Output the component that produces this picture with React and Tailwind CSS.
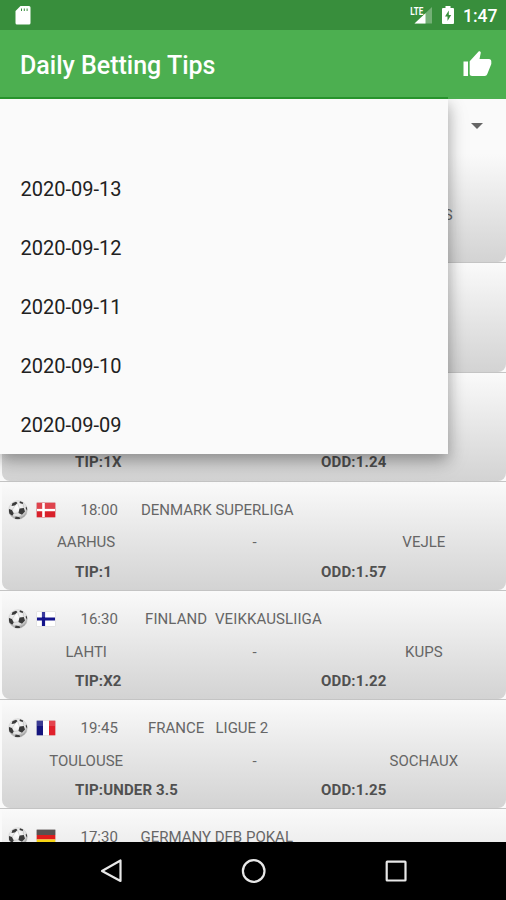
const DATES = ['2020-09-13', '2020-09-12', '2020-09-11', '2020-09-10', '2020-09-09'];

const MATCHES = [
  { away: 'NANTES' },
  {},
  { tip: '1X', odd: '1.24' },
  { flag: 'denmark', time: '18:00', league: 'DENMARK SUPERLIGA', indent: 'ml-[22.5px]', home: 'AARHUS', away: 'VEJLE', tip: '1', odd: '1.57' },
  { flag: 'finland', time: '16:30', league: 'FINLAND  VEIKKAUSLIIGA', indent: 'ml-[26.5px] tracking-[0.1px]', home: 'LAHTI', away: 'KUPS', tip: 'X2', odd: '1.22' },
  { flag: 'france', time: '19:45', league: 'FRANCE   LIGUE 2', indent: 'ml-[29.5px]', home: 'TOULOUSE', away: 'SOCHAUX', tip: 'UNDER 3.5', odd: '1.25' },
  { flag: 'germany', time: '17:30', league: 'GERMANY DFB POKAL', indent: 'ml-[22px]' },
];

function Flag({ name }) {
  return (
    <svg width="20" height="16" viewBox="0 0 20 16" className="shrink-0">
      <rect x="0.5" y="0.5" width="19" height="15" rx="1" fill="#fff" stroke="#d6d6d6" strokeWidth="0.6" />
      {name === 'denmark' && (
        <>
          <rect x="0.7" y="0.7" width="18.6" height="14.6" fill="#d9202b" />
          <path d="M7.5 1v14M1 8h18" stroke="#fff" strokeWidth="2.6" />
        </>
      )}
      {name === 'finland' && <path d="M7.5 1v14M1 8h18" stroke="#14148c" strokeWidth="3.2" />}
      {name === 'france' && (
        <>
          <rect x="0.7" y="0.7" width="6.3" height="14.6" fill="#15157e" />
          <rect x="13" y="0.7" width="6.3" height="14.6" fill="#e0202b" />
        </>
      )}
      {name === 'germany' && (
        <>
          <rect x="0.7" y="0.7" width="18.6" height="5.3" fill="#3a3030" />
          <rect x="0.7" y="6" width="18.6" height="4.5" fill="#df1c1c" />
          <rect x="0.7" y="10.5" width="18.6" height="4.8" fill="#f7d514" />
        </>
      )}
      <rect x="1" y="1" width="18" height="5" fill="#fff" opacity="0.16" />
    </svg>
  );
}

function Ball() {
  return (
    <svg width="20" height="20" viewBox="0 0 20 20" className="shrink-0">
      <defs>
        <radialGradient id="ball" cx="0.45" cy="0.35" r="0.65">
          <stop offset="0" stopColor="#fff" />
          <stop offset="0.7" stopColor="#e2e2e2" />
          <stop offset="1" stopColor="#8c8c8c" />
        </radialGradient>
        <clipPath id="ballClip">
          <circle cx="10" cy="10" r="9.3" />
        </clipPath>
      </defs>
      <circle cx="10" cy="10" r="9.3" fill="url(#ball)" stroke="#c8c8c8" strokeWidth="0.5" />
      <g clipPath="url(#ballClip)" fill="#3a3a3a">
        <path d="M11.5 8.500l4.300-.6 1.200 3.600-3 3.200-3.600-1.800z" />
        <path d="M4.500 3L8 1.800 9.500 3 7 5.500 3.500 6z" />
        <path d="M12 1l3.500 1.500-.8 1.500-3.200-1z" />
        <path d="M1 9l3 1 1.800 3.500-1.600 2.200L1 13.500z" />
        <path d="M7.500 16.500l4.200.7.300 1.800-5 .3z" />
        <path d="M18.200 6.500l1.300 2.500-.5 1.500-1.400-2.500z" />
        <path d="M9.500 3l2 5.500M7 5.500L4 10M10.400 12.900l-4.600.6M14 14.700l-2.300 2.500M15.800 7.900l-.6-3.900" stroke="#b5b5b5" strokeWidth="0.5" fill="none" />
      </g>
    </svg>
  );
}

function MatchRow({ match }) {
  return (
    <div className="h-[109.2px] shrink-0 border-b border-[#c4c4c4] bg-[#fafafa] pl-[2px]">
      <div className="h-full rounded-b-[8px] bg-linear-to-b from-[#fafafa] to-[#d3d3d3] pt-[17px]">
        <div className="flex h-[22px] items-center pl-[5.5px]">
          {match.flag && (
            <>
              <Ball />
              <div className="ml-[8px] flex">
                <Flag name={match.flag} />
              </div>
              <span className="ml-[25px] w-[38px] whitespace-nowrap">{match.time}</span>
              <span className={`whitespace-pre ${match.indent}`}>{match.league}</span>
            </>
          )}
        </div>
        <div className="mt-[10.5px] grid h-[22px] w-[507px] grid-cols-3 items-center pr-[2px] text-center">
          <span>{match.home}</span>
          <span>{match.home && '-'}</span>
          <span className="pl-[2px]">{match.away}</span>
        </div>
        <div className="mt-[7.5px] flex h-[22px] items-center pl-[73px] font-bold tracking-[0.15px] text-[#505050]">
          {match.tip && (
            <>
              <span className="w-[246px]">TIP:{match.tip}</span>
              <span>ODD:{match.odd}</span>
            </>
          )}
        </div>
      </div>
    </div>
  );
}

function StatusBar() {
  return (
    <div className="flex h-[30px] shrink-0 items-center bg-[#388e3c] text-white">
      <svg width="16" height="20" viewBox="0 0 16 20" className="ml-[15px]">
        <path d="M5.5 1H14a1.5 1.5 0 0 1 1.500 1.500V18A1.500 1.500 0 0 1 14 19.500H2A1.500 1.500 0 0 1 .5 18V6z" fill="#fff" />
        <path d="M6.500 3.500v2.500M9.300 3.500v2.500M12.100 3.500v2.500" stroke="#388e3c" strokeWidth="1" />
      </svg>
      <div className="flex-1" />
      <svg width="24" height="20" viewBox="0 0 24 20" className="mr-[8px]">
        <path d="M22 2v16.500H4.500z" fill="#fff" opacity="0.3" />
        <path d="M15.500 8.200v10.300H4.500z" fill="#fff" />
        <path d="M0 0h13v10.500H0z" fill="#388e3c" />
        <text x="0.300" y="9.800" fontSize="11.500" fontWeight="700" fontFamily="Roboto, sans-serif" fill="#fff" textLength="13" lengthAdjust="spacingAndGlyphs">LTE</text>
      </svg>
      <svg width="12" height="20" viewBox="0 0 12 20" className="mr-[9px]">
        <path d="M3.500 1h5v2H11a1 1 0 0 1 1 1v14a1 1 0 0 1-1 1H1a1 1 0 0 1-1-1V4a1 1 0 0 1 1-1h2.500z" fill="#fff" />
        <path d="M6.800 5.500L3 11.500h2.500v4.500L9.200 10H6.800z" fill="#388e3c" />
      </svg>
      <span className="w-[43px] pt-[2px] text-[17.5px] font-medium whitespace-nowrap">1:47</span>
    </div>
  );
}

function NavBar() {
  return (
    <div className="flex h-[58px] shrink-0 items-center bg-black">
      <svg width="506" height="58" viewBox="0 0 506 58" fill="none" stroke="#e8e8e8" strokeWidth="2.200" strokeLinejoin="round">
        <path d="M120.500 18.500v20.500L102 29z" />
        <circle cx="253.700" cy="29" r="10.800" />
        <rect x="386.700" y="19.700" width="18.800" height="18.800" rx="0.500" />
      </svg>
    </div>
  );
}

export default function App() {
  return (
    <div className="flex h-[900px] w-[506px] flex-col overflow-hidden bg-[#fafafa] font-[Roboto,sans-serif] text-[15px] text-[#666]">
      <StatusBar />
      <header className="flex h-[69px] shrink-0 flex-col bg-[#4caf50] text-white">
        <div className="flex flex-1 items-center justify-between pt-[4px] pr-[14px] pl-[20px]">
          <h1 className="text-[25px] font-medium">Daily Betting Tips</h1>
          <svg width="30" height="28" viewBox="0 0 30 28" fill="#fff" className="mb-[3px]">
            <path d="M1.500 11.500h4.500V26H1.500zM7.700 11.200L16.600 1.500c.7-.8 2.300-.1 2.200 1.300L17.500 9H27c1.500 0 2.300 1.200 2.300 2.500v2.500l-4 10c-.5 1.200-1.300 2-2.600 2H10c-1.300 0-2.300-1-2.300-2.300z" />
          </svg>
        </div>
        <div className="h-[2px] w-[448px] bg-[#27932c]" />
      </header>
      <main className="relative flex min-h-0 flex-1 flex-col overflow-hidden">
        <div className="flex h-[55.300px] shrink-0 items-center justify-end pr-[23px] pb-[1px]">
          <svg width="12" height="6" viewBox="0 0 12 6">
            <path d="M0 0h12L6 6z" fill="#666" />
          </svg>
        </div>
        {MATCHES.map((match, i) => (
          <MatchRow key={i} match={match} />
        ))}
        <ul className="absolute top-0 left-0 h-[354.500px] w-[448px] bg-[#fafafa] pt-[60px] text-[20px] text-[#212121] shadow-[0_6px_14px_rgba(0,0,0,0.3),0_8px_24px_rgba(0,0,0,0.1)]">
          {DATES.map((date) => (
            <li key={date} className="flex h-[59px] items-center pl-[20.5px]">{date}</li>
          ))}
        </ul>
      </main>
      <NavBar />
    </div>
  );
}
